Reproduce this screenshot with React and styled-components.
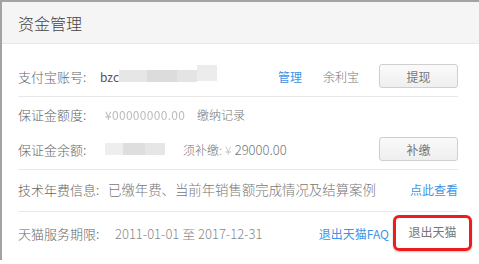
import React from "react";
import styled, { createGlobalStyle } from "styled-components";

const Global = createGlobalStyle`
  html, body { margin: 0; padding: 0; background: #fff; }
  body { font-family: "Noto Sans CJK SC", "Noto Sans", sans-serif; }
`;

const Panel = styled.div`
  width: 479px;
  height: 260px;
  box-sizing: border-box;
  border-top: 2px solid #a3a3a3;
  border-left: 2px solid #a3a3a3;
  display: flex;
  flex-direction: column;
`;

const Header = styled.div`
  height: 41px;
  background: #f5f5f5;
  border-bottom: 1px solid #e8e8e8;
  display: flex;
  align-items: center;
  padding-left: 16px;
  font-size: 16px;
  font-weight: 300;
  color: #444;
`;

const Body = styled.div`
  padding: 0 21px 0 16px;
  display: flex;
  flex-direction: column;
`;

const Section = styled.div`
  display: flex;
  flex-direction: column;
  gap: ${(p) => p.$gap || 0}px;
  padding: ${(p) => p.$pad};
  border-bottom: ${(p) => (p.$last ? "none" : "1px solid #e8e8e8")};
`;

const Row = styled.div`
  display: flex;
  align-items: center;
  height: ${(p) => p.$h || 24}px;
  font-size: 12px;
  color: #777;
  white-space: nowrap;
`;

const Label = styled.span`
  width: ${(p) => p.$w || 82}px;
  flex-shrink: 0;
  font-size: 13px;
  color: #666;
  font-weight: 300;
`;

const Text = styled.span`
  margin-left: ${(p) => p.$ml || 0}px;
  color: ${(p) => p.$color || "#777"};
  font-size: ${(p) => p.$fs || 12}px;
  font-weight: 300;
  flex-shrink: 0;
`;

const Spacer = styled.div`
  flex: 1;
`;

const Link = styled.a`
  color: #3f93e6;
  text-decoration: none;
  font-size: 12px;
  margin-right: ${(p) => p.$mr || 0}px;
  cursor: pointer;
`;

const Button = styled.button`
  width: 79px;
  height: 24px;
  box-sizing: border-box;
  border: 1px solid #cfcfcf;
  border-radius: 3px;
  background: linear-gradient(#fafafa, #efefef);
  color: #777;
  font-family: inherit;
  font-size: 12px;
  padding: 0;
`;

const Marked = styled.div`
  width: 79px;
  height: 36px;
  box-sizing: border-box;
  border: 3px solid #ee1c1c;
  border-radius: 6px;
  display: flex;
  align-items: center;
  justify-content: center;
  color: #777;
  font-size: 12px;
  margin-right: -14px;
  padding-bottom: 4px;
  box-shadow: 0 1px 2px rgba(0, 0, 0, 0.25);
`;

const Masked = styled.span`
  display: flex;
  align-items: center;
  width: ${(p) => p.$w}px;
  flex-shrink: 0;
`;

const Clear = styled.span`
  color: #555;
  font-size: 12px;
`;

const Mosaic = styled.span`
  display: block;
  flex-shrink: 0;
  width: ${(p) => p.$w}px;
  height: ${(p) => p.$h || 12}px;
  margin-top: ${(p) => p.$mt || 0}px;
  background: ${(p) => p.$c || "#e2e2e2"};
  filter: blur(0.5px);
`;

const Fuzzy = styled.span`
  color: #bbb;
  font-size: 12px;
  filter: blur(0.7px);
  letter-spacing: 0.3px;
  flex-shrink: 0;
`;

export default function App() {
  return (
    <>
      <Global />
      <Panel>
        <Header>资金管理</Header>
        <Body>
          <Section $pad="20px 0 8px">
            <Row>
              <Label>支付宝账号:</Label>
              <Masked $w={120}>
                <Clear>bzc</Clear>
                <Mosaic $w={28} $c="#e6e6e6" />
                <Mosaic $w={30} $c="#dcdcdc" />
                <Mosaic $w={20} $c="#e4e4e4" />
                <Mosaic $w={20} $c="#ececec" $h={16} $mt={-6} />
              </Masked>
              <Spacer />
              <Link $mr={21}>管理</Link>
              <Text>余利宝</Text>
              <Text $ml={20} />
              <Button>提现</Button>
            </Row>
          </Section>
          <Section $pad="5px 0 8px" $gap={11}>
            <Row>
              <Label $w={87}>保证金额度:</Label>
              <Masked $w={92}>
                <Fuzzy>¥00000000.00</Fuzzy>
              </Masked>
              <Text>缴纳记录</Text>
            </Row>
            <Row>
              <Label $w={87}>保证金余额:</Label>
              <Masked $w={78}>
                <Mosaic $w={18} $c="#eeeeee" />
                <Mosaic $w={22} $c="#dedede" />
                <Mosaic $w={20} $c="#e6e6e6" />
              </Masked>
              <Text>须补缴:</Text>
              <Text $ml={3} $fs={13}>
                <Fuzzy>¥ </Fuzzy>29000.00
              </Text>
              <Spacer />
              <Button>补缴</Button>
            </Row>
          </Section>
          <Section $pad="7px 0 10px">
            <Row>
              <Label $w={90}>技术年费信息:</Label>
              <Text $fs={13.4} $color="#777">
                已缴年费、当前年销售额完成情况及结算案例
              </Text>
              <Spacer />
              <Link>点此查看</Link>
            </Row>
          </Section>
          <Section $pad="3px 0 0" $last>
            <Row $h={36}>
              <Label $w={97}>天猫服务期限:</Label>
              <Text $fs={13} $color="#888">
                2011-01-01 至 2017-12-31
              </Text>
              <Spacer />
              <Link $mr={4}>退出天猫FAQ</Link>
              <Marked>退出天猫</Marked>
            </Row>
          </Section>
        </Body>
      </Panel>
    </>
  );
}
